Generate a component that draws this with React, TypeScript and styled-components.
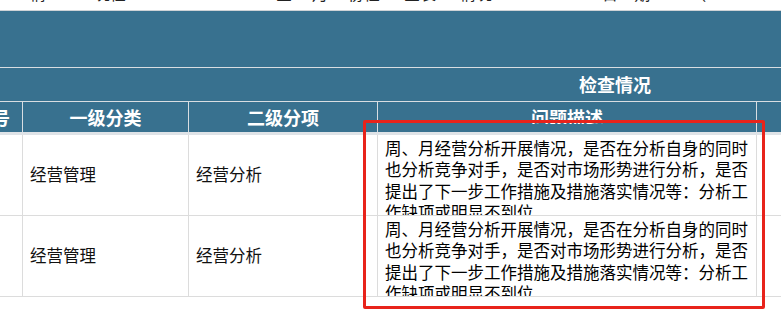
import React from "react";
import styled, { createGlobalStyle } from "styled-components";

const Global = createGlobalStyle`
  html, body { margin: 0; padding: 0; background: #fff; }
  body { font-family: "Noto Sans CJK SC", "Noto Sans", sans-serif; }
`;

const Page = styled.div`
  position: relative;
  width: 781px;
  height: 325px;
  overflow: hidden;
  background: #fff;
`;

const TopStrip = styled.div`
  height: 10px;
  border-bottom: 1px solid #cfd3d6;
  overflow: hidden;
  display: flex;
  align-items: flex-end;
`;

const TopText = styled.span<{ $ml: number }>`
  margin-left: ${(p) => p.$ml}px;
  font-size: 16px;
  line-height: 16px;
  color: #222;
  white-space: nowrap;
  transform: translateY(-9px);
`;

const TableWrap = styled.div`
  margin-left: -39px;
  width: 900px;
`;

const Table = styled.table`
  border-collapse: collapse;
  table-layout: fixed;
  width: 891px;
`;

const HeadBand = styled.tr<{ $h: number }>`
  height: ${(p) => p.$h}px;
  background: #38718f;
  & > th {
    border-bottom: 1px solid #d9dee2;
  }
`;

const BandCell = styled.th`
  padding: 0;
  color: #fff;
  font-size: 18px;
  font-weight: 700;
  text-align: center;
  vertical-align: middle;
  line-height: 18px;
`;

const HeadRow = styled.tr`
  height: 32px;
  background: #38718f;
`;

const HeadCell = styled.th<{ $top?: boolean }>`
  padding: ${(p) => (p.$top ? "6px 0 0" : "0")};
  border-left: 1px solid #d9dee2;
  border-right: 1px solid #d9dee2;
  border-bottom: 3px solid #dfe3e7;
  color: #fff;
  font-size: 18px;
  font-weight: 700;
  line-height: 18px;
  text-align: center;
  vertical-align: ${(p) => (p.$top ? "top" : "middle")};
`;

const Clip = styled.span`
  display: block;
  height: 16px;
  overflow: hidden;
`;

const BodyRow = styled.tr`
  height: 81px;
`;

const Cell = styled.td`
  padding: 0 0 0 7px;
  border: 1px solid #dcdcdc;
  color: #111;
  font-size: 16.5px;
  line-height: 21.5px;
  vertical-align: middle;
  white-space: nowrap;
  overflow: hidden;
`;

const DescCell = styled.td`
  padding: 3px 0 0 7px;
  border: 1px solid #dcdcdc;
  vertical-align: top;
`;

const Desc = styled.div`
  height: 77px;
  overflow: hidden;
  color: #000;
  font-size: 16.5px;
  line-height: 21.5px;
  width: 368px;
  word-break: break-all;
`;

const Highlight = styled.div`
  position: absolute;
  left: 363px;
  top: 120px;
  width: 396px;
  height: 183px;
  border: 3px solid #e8231b;
  border-radius: 2px;
  pointer-events: none;
`;

const desc =
  "周、月经营分析开展情况，是否在分析自身的同时也分析竞争对手，是否对市场形势进行分析，是否提出了下一步工作措施及措施落实情况等：分析工作缺项或明显不到位";

const rows = [
  { a: "经营管理", b: "经营分析" },
  { a: "经营管理", b: "经营分析" },
];

export default function App() {
  return (
    <>
      <Global />
      <Page>
        <TopStrip>
          <TopText $ml={30}>情</TopText>
          <TopText $ml={48}>况检</TopText>
          <TopText $ml={150}>查</TopText>
          <TopText $ml={20}>月</TopText>
          <TopText $ml={20}>份检</TopText>
          <TopText $ml={24}>查表</TopText>
          <TopText $ml={24}>情况</TopText>
          <TopText $ml={110}>日</TopText>
          <TopText $ml={16}>期</TopText>
          <TopText $ml={40}>（</TopText>
        </TopStrip>
        <TableWrap>
          <Table>
            <colgroup>
              <col style={{ width: 61 }} />
              <col style={{ width: 166 }} />
              <col style={{ width: 189 }} />
              <col style={{ width: 379 }} />
              <col style={{ width: 96 }} />
            </colgroup>
            <thead>
              <HeadBand $h={56}>
                <BandCell colSpan={5} />
              </HeadBand>
              <HeadBand $h={34}>
                <BandCell colSpan={3} />
                <BandCell colSpan={2}>检查情况</BandCell>
              </HeadBand>
              <HeadRow>
                <HeadCell>序号</HeadCell>
                <HeadCell>一级分类</HeadCell>
                <HeadCell>二级分项</HeadCell>
                <HeadCell $top>
                  <Clip>问题描述</Clip>
                </HeadCell>
                <HeadCell />
              </HeadRow>
            </thead>
            <tbody>
              {rows.map((r, i) => (
                <BodyRow key={i}>
                  <Cell />
                  <Cell>{r.a}</Cell>
                  <Cell>{r.b}</Cell>
                  <DescCell>
                    <Desc>{desc}</Desc>
                  </DescCell>
                  <Cell />
                </BodyRow>
              ))}
            </tbody>
          </Table>
        </TableWrap>
        <Highlight />
      </Page>
    </>
  );
}
